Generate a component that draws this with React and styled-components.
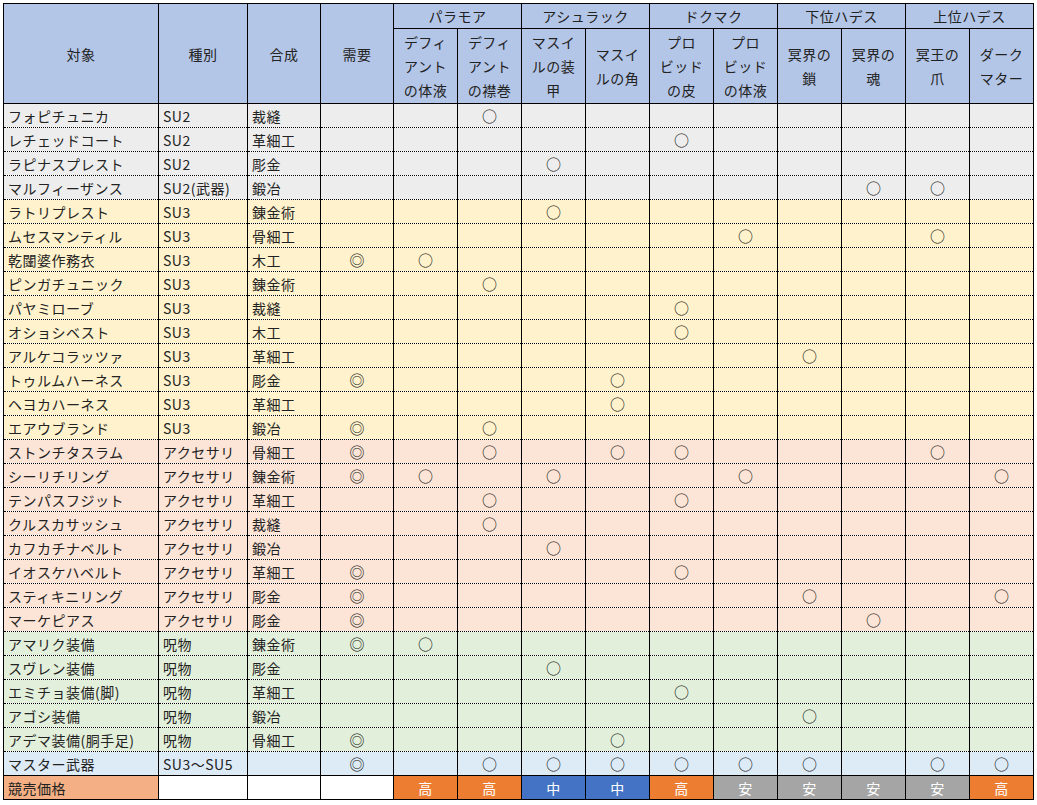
import React from "react";
import styled, { createGlobalStyle } from "styled-components";

const GlobalStyle = createGlobalStyle`
  html, body {
    margin: 0;
    background: #ffffff;
  }
  body {
    font-family: "Noto Sans CJK JP", "Noto Sans", sans-serif;
    color: #222222;
  }
`;

const ROW_BG = {
  su2: "#ededed",
  su3: "#fff2cc",
  acc: "#fce4d6",
  cursed: "#e2efda",
  master: "#ddebf7",
};

const PRICE_BG = {
  高: "#ed7d31",
  中: "#4472c4",
  安: "#a5a5a5",
};

const groups = ["パラモア", "アシュラック", "ドクマク", "下位ハデス", "上位ハデス"];

const materials = [
  ["デフィ", "アント", "の体液"],
  ["デフィ", "アント", "の襟巻"],
  ["マスイ", "ルの装", "甲"],
  ["マスイ", "ルの角"],
  ["プロ", "ビッド", "の皮"],
  ["プロ", "ビッド", "の体液"],
  ["冥界の", "鎖"],
  ["冥界の", "魂"],
  ["冥王の", "爪"],
  ["ダーク", "マター"],
];

// name, type, craft, demand, material columns (1-based), row colour
const rows = [
  ["フォピチュニカ", "SU2", "裁縫", "", [2], "su2"],
  ["レチェッドコート", "SU2", "革細工", "", [5], "su2"],
  ["ラピナスプレスト", "SU2", "彫金", "", [3], "su2"],
  ["マルフィーザンス", "SU2(武器)", "鍛冶", "", [8, 9], "su2"],
  ["ラトリプレスト", "SU3", "錬金術", "", [3], "su3"],
  ["ムセスマンティル", "SU3", "骨細工", "", [6, 9], "su3"],
  ["乾闥婆作務衣", "SU3", "木工", "◎", [1], "su3"],
  ["ピンガチュニック", "SU3", "錬金術", "", [2], "su3"],
  ["パヤミローブ", "SU3", "裁縫", "", [5], "su3"],
  ["オショシベスト", "SU3", "木工", "", [5], "su3"],
  ["アルケコラッツァ", "SU3", "革細工", "", [7], "su3"],
  ["トゥルムハーネス", "SU3", "彫金", "◎", [4], "su3"],
  ["ヘヨカハーネス", "SU3", "革細工", "", [4], "su3"],
  ["エアウブランド", "SU3", "鍛冶", "◎", [2], "su3"],
  ["ストンチタスラム", "アクセサリ", "骨細工", "◎", [2, 4, 5, 9], "acc"],
  ["シーリチリング", "アクセサリ", "錬金術", "◎", [1, 3, 6, 10], "acc"],
  ["テンパスフジット", "アクセサリ", "革細工", "", [2, 5], "acc"],
  ["クルスカサッシュ", "アクセサリ", "裁縫", "", [2], "acc"],
  ["カフカチナベルト", "アクセサリ", "鍛冶", "", [3], "acc"],
  ["イオスケハベルト", "アクセサリ", "革細工", "◎", [5], "acc"],
  ["スティキニリング", "アクセサリ", "彫金", "◎", [7, 10], "acc"],
  ["マーケピアス", "アクセサリ", "彫金", "◎", [8], "acc"],
  ["アマリク装備", "呪物", "錬金術", "◎", [1], "cursed"],
  ["スヴレン装備", "呪物", "彫金", "", [3], "cursed"],
  ["エミチョ装備(脚)", "呪物", "革細工", "", [5], "cursed"],
  ["アゴシ装備", "呪物", "鍛冶", "", [7], "cursed"],
  ["アデマ装備(胴手足)", "呪物", "骨細工", "◎", [4], "cursed"],
  ["マスター武器", "SU3～SU5", "", "◎", [2, 3, 4, 5, 6, 7, 9, 10], "master"],
];

const prices = ["高", "高", "中", "中", "高", "安", "安", "安", "安", "高"];

const Sheet = styled.div`
  padding: 3px 0 0 3px;
`;

const Table = styled.table`
  border-collapse: collapse;
  table-layout: fixed;
  width: 1031px;
  font-size: 14px;
  letter-spacing: 0.5px;
`;

const HeadRow = styled.tr`
  height: ${(p) => p.$h}px;
`;

const HeadCell = styled.th`
  background: #b4c6e7;
  border: 1px solid #000;
  font-weight: normal;
  text-align: center;
  vertical-align: middle;
  line-height: 24px;
  padding: 0;
  color: #222222;
`;

const HeadLine = styled.div`
  height: 24px;
`;

const Row = styled.tr`
  height: 24px;
  background: ${(p) => ROW_BG[p.$tone]};
`;

const Cell = styled.td`
  border-left: 1px solid #000;
  border-right: 1px solid #000;
  border-bottom: 1px dotted #000;
  padding: 0 ${(p) => (p.$center ? 0 : 4)}px;
  text-align: ${(p) => (p.$center ? "center" : "left")};
  vertical-align: middle;
  white-space: nowrap;
  overflow: hidden;
  line-height: 22px;
`;

const Mark = styled.span`
  font-size: 15px;
  color: #111111;
  letter-spacing: 0;
`;

const PriceRow = styled.tr`
  height: 24px;
`;

const PriceCell = styled.td`
  border: 1px solid #000;
  padding: 0 4px;
  line-height: 22px;
  text-align: ${(p) => (p.$level ? "center" : "left")};
  background: ${(p) => (p.$level ? PRICE_BG[p.$level] : p.$bg || "#ffffff")};
  color: ${(p) => (p.$level ? "#ffffff" : "#222222")};
`;

export default function App() {
  return (
    <Sheet>
      <GlobalStyle />
      <Table>
        <colgroup>
          <col style={{ width: 155 }} />
          <col style={{ width: 89 }} />
          <col style={{ width: 73 }} />
          <col style={{ width: 73 }} />
          {materials.map((_, i) => (
            <col key={i} style={{ width: 64 }} />
          ))}
        </colgroup>
        <thead>
          <HeadRow $h={25}>
            <HeadCell rowSpan={2}>対象</HeadCell>
            <HeadCell rowSpan={2}>種別</HeadCell>
            <HeadCell rowSpan={2}>合成</HeadCell>
            <HeadCell rowSpan={2}>需要</HeadCell>
            {groups.map((g) => (
              <HeadCell key={g} colSpan={2}>
                {g}
              </HeadCell>
            ))}
          </HeadRow>
          <HeadRow $h={75}>
            {materials.map((lines, i) => (
              <HeadCell key={i}>
                {lines.map((l, j) => (
                  <HeadLine key={j}>{l}</HeadLine>
                ))}
              </HeadCell>
            ))}
          </HeadRow>
        </thead>
        <tbody>
          {rows.map(([name, type, craft, demand, marks, tone]) => (
            <Row key={name} $tone={tone}>
              <Cell>{name}</Cell>
              <Cell>{type}</Cell>
              <Cell>{craft}</Cell>
              <Cell $center>
                <Mark>{demand}</Mark>
              </Cell>
              {materials.map((_, i) => (
                <Cell key={i} $center>
                  {marks.includes(i + 1) && <Mark>○</Mark>}
                </Cell>
              ))}
            </Row>
          ))}
          <PriceRow>
            <PriceCell $bg="#f4b084">競売価格</PriceCell>
            <PriceCell />
            <PriceCell />
            <PriceCell />
            {prices.map((p, i) => (
              <PriceCell key={i} $level={p}>
                {p}
              </PriceCell>
            ))}
          </PriceRow>
        </tbody>
      </Table>
    </Sheet>
  );
}
